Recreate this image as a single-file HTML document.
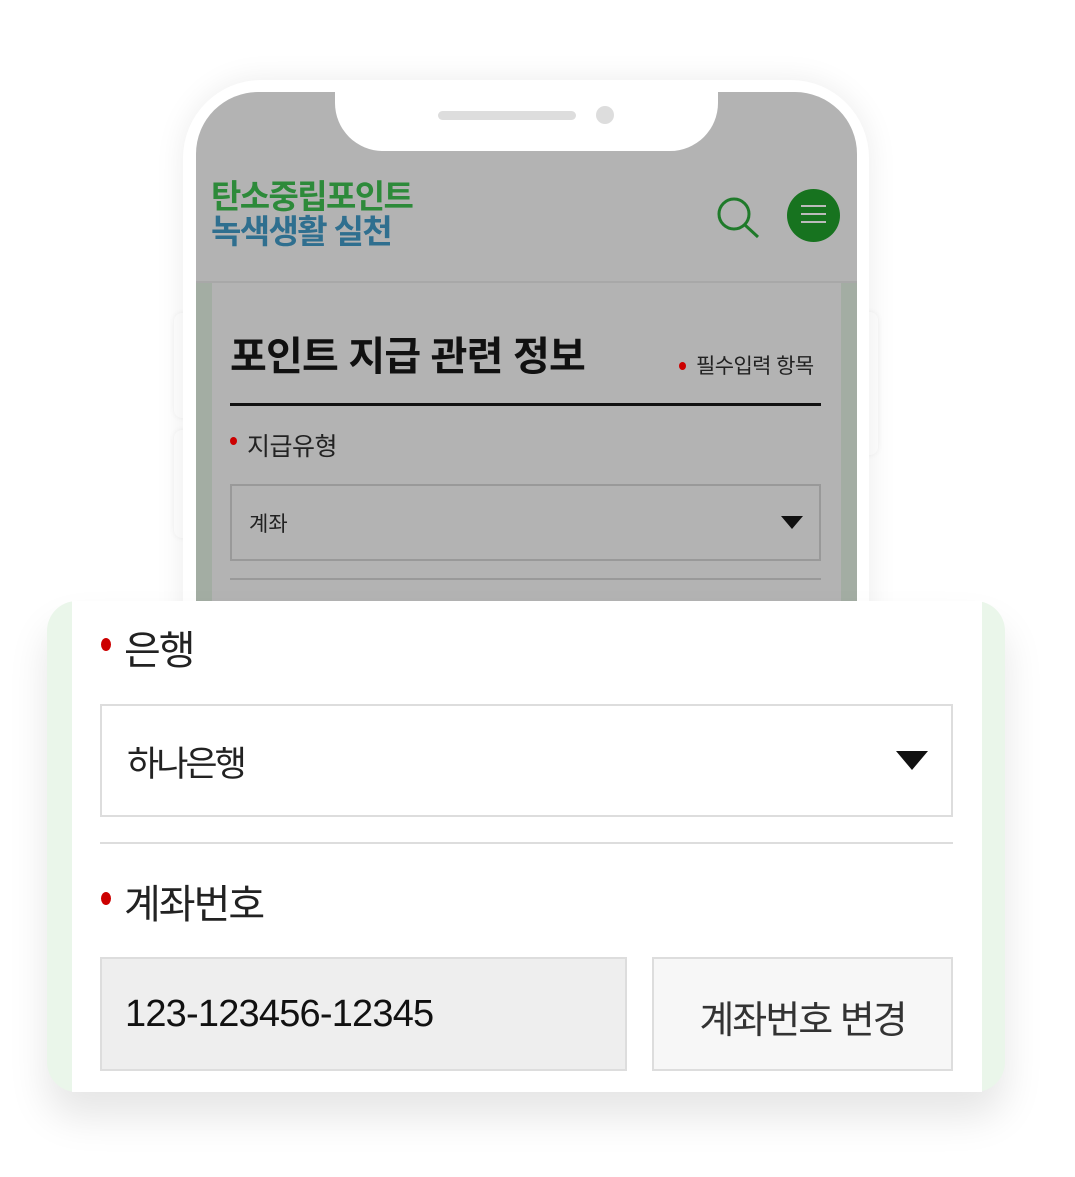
<!DOCTYPE html>
<html><head><meta charset="utf-8"><style>
*{margin:0;padding:0;box-sizing:border-box}
body{width:1075px;height:1177px;background:#fff;position:relative;overflow:hidden;font-family:"Liberation Sans","Noto Sans CJK KR",sans-serif}
.abs{position:absolute}
.phone{left:183px;top:80px;width:686px;height:700px;background:#fff;border-radius:78px 78px 0 0;box-shadow:0 0 30px rgba(0,0,0,.08)}
.btn{background:#fff;border-radius:8px;box-shadow:0 0 6px rgba(0,0,0,.06)}
.screen{left:196px;top:92px;width:661px;height:520px;background:#b3b3b3;border-radius:62px 62px 0 0;overflow:hidden}
.notch{left:335px;top:80px;width:383px;height:71px;background:#fff;border-radius:0 0 48px 48px}
.strip{top:283px;width:16px;height:330px;background:#a3ada3}
.dot{position:absolute;border-radius:50%;background:#c00}
.card{left:47px;top:601px;width:958px;height:491px;background:#eaf6ea;border-radius:30px;box-shadow:0 25px 40px rgba(0,0,0,.1)}
.white{left:72px;top:601px;width:910px;height:491px;background:#fff}
</style></head><body>
<div class="abs btn" style="left:174px;top:313px;width:20px;height:105px"></div>
<div class="abs btn" style="left:174px;top:430px;width:20px;height:108px"></div>
<div class="abs btn" style="left:858px;top:312px;width:20px;height:143px"></div>
<div class="abs phone"></div>
<div class="abs screen"></div>
<div class="abs notch"></div>
<div class="abs" style="left:438px;top:111px;width:138px;height:9px;border-radius:5px;background:#ddd"></div>
<div class="abs" style="left:596px;top:106px;width:18px;height:18px;border-radius:50%;background:#ddd"></div>
<div class="abs" style="left:211px;top:180px;font-size:33px;font-weight:bold;line-height:34px;color:#2d8a3a;letter-spacing:-1.6px">탄소중립포인트</div>
<div class="abs" style="left:211px;top:215px;font-size:33px;font-weight:bold;line-height:34px;color:#2f6f8f;letter-spacing:-1.6px">녹색생활 실천</div>
<svg class="abs" style="left:714px;top:195px" width="50" height="46"><circle cx="20" cy="19" r="15" fill="none" stroke="#1f7a2a" stroke-width="3"/><line x1="31" y1="30" x2="44" y2="42" stroke="#1f7a2a" stroke-width="3"/></svg>
<div class="abs" style="left:787px;top:189px;width:53px;height:53px;border-radius:50%;background:#17731f"></div>
<div class="abs" style="left:801px;top:205px;width:25px;height:2px;background:#bbb;box-shadow:0 8px 0 #bbb,0 16px 0 #bbb"></div>
<div class="abs" style="left:196px;top:281px;width:661px;height:2px;background:#a8a8a8"></div>
<div class="abs strip" style="left:196px"></div>
<div class="abs strip" style="left:841px"></div>
<div class="abs" style="left:230px;top:324px;font-size:40px;font-weight:bold;color:#111;letter-spacing:-0.8px">포인트 지급 관련 정보</div>
<div class="dot" style="left:679px;top:362px;width:7px;height:8px"></div>
<div class="abs" style="left:696px;top:350px;font-size:21px;color:#222;letter-spacing:-0.6px">필수입력 항목</div>
<div class="abs" style="left:230px;top:403px;width:591px;height:3px;background:#111"></div>
<div class="dot" style="left:230px;top:437px;width:7px;height:8px"></div>
<div class="abs" style="left:247px;top:427px;font-size:25px;color:#222;letter-spacing:-0.5px">지급유형</div>
<div class="abs" style="left:230px;top:484px;width:591px;height:77px;border:2px solid #999"></div>
<div class="abs" style="left:249px;top:508px;font-size:21px;color:#222">계좌</div>
<svg class="abs" style="left:780px;top:515px" width="24" height="16"><path d="M1 1H23L12 14Z" fill="#111"/></svg>
<div class="abs" style="left:230px;top:578px;width:591px;height:2px;background:#999"></div>
<div class="abs card"></div>
<div class="abs white"></div>
<div class="dot" style="left:101px;top:638px;width:10px;height:13px"></div>
<div class="abs" style="left:124px;top:618px;font-size:40px;color:#222;letter-spacing:-2px">은행</div>
<div class="abs" style="left:100px;top:704px;width:853px;height:113px;border:2px solid #ddd"></div>
<div class="abs" style="left:127px;top:736px;font-size:35px;color:#222;letter-spacing:-3px">하나은행</div>
<svg class="abs" style="left:895px;top:750px" width="34" height="22"><path d="M1 1H33L17 20Z" fill="#111"/></svg>
<div class="abs" style="left:100px;top:842px;width:853px;height:2px;background:#ddd"></div>
<div class="dot" style="left:101px;top:892px;width:10px;height:13px"></div>
<div class="abs" style="left:124px;top:872px;font-size:40px;color:#222;letter-spacing:-2px">계좌번호</div>
<div class="abs" style="left:100px;top:957px;width:527px;height:114px;border:2px solid #ddd;background:#eee"></div>
<div class="abs" style="left:125px;top:993px;font-size:38px;color:#111;letter-spacing:-0.8px">123-123456-12345</div>
<div class="abs" style="left:652px;top:957px;width:301px;height:114px;border:2px solid #ddd;background:#f7f7f7"></div>
<div class="abs" style="left:652px;top:989px;width:301px;text-align:center;font-size:38px;color:#333;letter-spacing:-2px">계좌번호 변경</div>
</body></html>
